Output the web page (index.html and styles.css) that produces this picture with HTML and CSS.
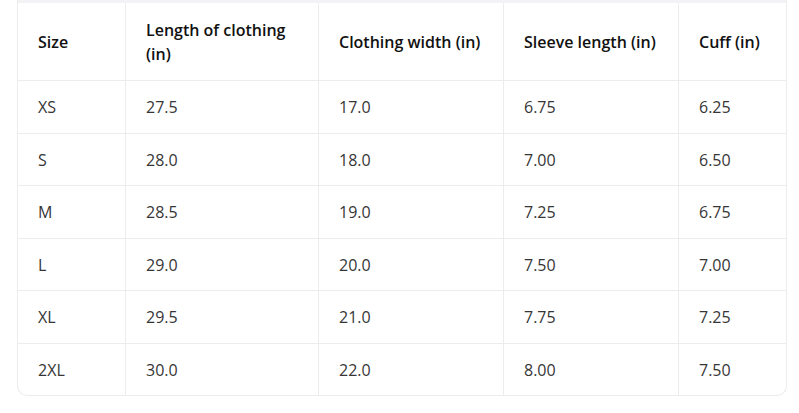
FILE: index.html
```html
<!DOCTYPE html>
<html>
<head>
<meta charset="utf-8">
<link rel="stylesheet" href="styles.css">
</head>
<body>
<div class="page">
  <div class="frame">
    <div class="topband"></div>
    <table class="sizes">
      <colgroup>
        <col class="c1"><col class="c2"><col class="c3"><col class="c4"><col class="c5">
      </colgroup>
      <thead>
        <tr>
          <th>Size</th>
          <th>Length of clothing (in)</th>
          <th>Clothing width (in)</th>
          <th>Sleeve length (in)</th>
          <th>Cuff (in)</th>
        </tr>
      </thead>
      <tbody>
        <tr><td>XS</td><td>27.5</td><td>17.0</td><td>6.75</td><td>6.25</td></tr>
        <tr><td>S</td><td>28.0</td><td>18.0</td><td>7.00</td><td>6.50</td></tr>
        <tr><td>M</td><td>28.5</td><td>19.0</td><td>7.25</td><td>6.75</td></tr>
        <tr><td>L</td><td>29.0</td><td>20.0</td><td>7.50</td><td>7.00</td></tr>
        <tr><td>XL</td><td>29.5</td><td>21.0</td><td>7.75</td><td>7.25</td></tr>
        <tr><td>2XL</td><td>30.0</td><td>22.0</td><td>8.00</td><td>7.50</td></tr>
      </tbody>
    </table>
  </div>
</div>
</body>
</html>
```

FILE: styles.css
```css
html, body {
  margin: 0;
  padding: 0;
  background: #ffffff;
}

.page {
  padding: 0 12px 0 17px;
  font-family: "Open Sans", "Noto Sans", sans-serif;
  font-size: 16px;
  line-height: 24px;
  color: #363636;
}

.frame {
  width: 770px;
  box-sizing: border-box;
  border: 1px solid #ececec;
  border-top: none;
  border-radius: 0 0 10px 10px;
  overflow: hidden;
}

.topband {
  height: 3px;
  background: #f3f3f5;
}

.sizes {
  width: 100%;
  border-collapse: separate;
  border-spacing: 0;
  table-layout: fixed;
}

.c1 { width: 108px; }
.c2 { width: 193px; }
.c3 { width: 185px; }
.c4 { width: 175px; }
.c5 { width: auto; }

.sizes th,
.sizes td {
  text-align: left;
  vertical-align: middle;
  padding: 14px 20px 14px 20px;
  border-right: 1px solid #ececec;
  border-bottom: 1px solid #ececec;
}

.sizes th:last-child,
.sizes td:last-child {
  border-right: none;
}

.sizes tbody tr:last-child td {
  border-bottom: none;
}

.sizes th {
  font-weight: 600;
  color: #111111;
  padding-top: 15px;
  padding-bottom: 14px;
}

.sizes td {
  font-weight: 400;
  padding-top: 14px;
  padding-bottom: 13.5px;
}
```
